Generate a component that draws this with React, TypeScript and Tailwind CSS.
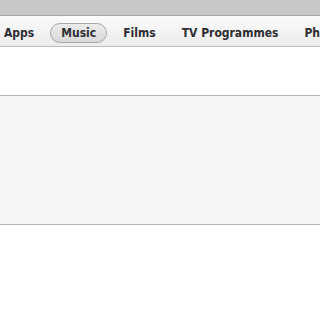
import React from 'react';

const tabs = ['Apps', 'Music', 'Films', 'TV Programmes', 'Photos'];

export default function App() {
  return (
    <div className="w-[320px] h-[320px] overflow-hidden bg-white" style={{ fontFamily: '"DejaVu Sans Condensed", "DejaVu Sans", Verdana, sans-serif' }}>
      {/* top chrome */}
      <div className="h-[16px] bg-[#c8c8c8] border-b border-[#a3a3a3]" />
      {/* tab bar */}
      <div className="h-[31px] bg-gradient-to-b from-[#fbfbfb] to-[#ececec] border-b border-[#bdbdbd] flex items-center whitespace-nowrap">
        <div className="flex items-center gap-[6px] -ml-[6px] mt-[3px]">
          {tabs.map((t) =>
            t === 'Music' ? (
              <div
                key={t}
                className="px-[10px] h-[20px] flex items-center rounded-full border border-[#a9a9a9] bg-gradient-to-b from-[#ececec] to-[#d9d9d9] text-[12px] font-bold text-[#2e2e33]"
              >
                {t}
              </div>
            ) : (
              <div key={t} className="px-[10px] h-[20px] flex items-center text-[12px] font-bold text-[#2e2e33]">
                {t}
              </div>
            )
          )}
        </div>
      </div>
      <div className="h-[48px]" />
      <div className="h-[130px] bg-[#f5f5f5] border-y border-[#b5b5b5]" />
    </div>
  );
}
